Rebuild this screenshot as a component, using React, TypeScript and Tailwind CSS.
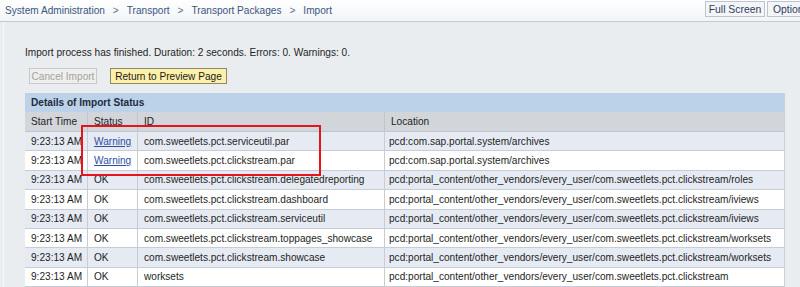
import React from 'react'

const rows = [
  { time: "9:23:13 AM", status: "Warning", id: "com.sweetlets.pct.serviceutil.par", location: "pcd:com.sap.portal.system/archives" },
  { time: "9:23:13 AM", status: "Warning", id: "com.sweetlets.pct.clickstream.par", location: "pcd:com.sap.portal.system/archives" },
  { time: "9:23:13 AM", status: "OK", id: "com.sweetlets.pct.clickstream.delegatedreporting", location: "pcd:portal_content/other_vendors/every_user/com.sweetlets.pct.clickstream/roles" },
  { time: "9:23:13 AM", status: "OK", id: "com.sweetlets.pct.clickstream.dashboard", location: "pcd:portal_content/other_vendors/every_user/com.sweetlets.pct.clickstream/iviews" },
  { time: "9:23:13 AM", status: "OK", id: "com.sweetlets.pct.clickstream.serviceutil", location: "pcd:portal_content/other_vendors/every_user/com.sweetlets.pct.clickstream/iviews" },
  { time: "9:23:13 AM", status: "OK", id: "com.sweetlets.pct.clickstream.toppages_showcase", location: "pcd:portal_content/other_vendors/every_user/com.sweetlets.pct.clickstream/worksets" },
  { time: "9:23:13 AM", status: "OK", id: "com.sweetlets.pct.clickstream.showcase", location: "pcd:portal_content/other_vendors/every_user/com.sweetlets.pct.clickstream/worksets" },
  { time: "9:23:13 AM", status: "OK", id: "worksets", location: "pcd:portal_content/other_vendors/every_user/com.sweetlets.pct.clickstream" },
];

const crumbs = ["System Administration", "Transport", "Transport Packages", "Import"];

export default function App() {
  return (
    <div className="w-[800px] h-[287px] overflow-hidden bg-[#eaedf0] font-['Liberation_Sans',Arial,sans-serif] text-[10.1px] leading-[13px] text-[#1e1e1e]">
      {/* breadcrumb bar */}
      <div className="h-[22px] flex items-center border-b border-[#c3cad4] bg-gradient-to-b from-white to-[#f2f4f7] pl-[5px] overflow-hidden">
        <div className="flex-1 flex items-center text-[#3b5580] whitespace-nowrap">
          {crumbs.map((c, i) => (
            <React.Fragment key={c}>
              {i > 0 && <span className="px-[8px] text-[#5a6f90]">&gt;</span>}
              <span>{c}</span>
            </React.Fragment>
          ))}
        </div>
        <div className="w-[95px] shrink-0 flex gap-[2px] self-start pt-[1px]">
          <button className="w-[60px] shrink-0 h-[16px] border border-[#bcc4cf] bg-[#f3f5f8] text-[#2f3e5c] text-[10.4px] leading-[13px]">Full Screen</button>
          <button className="w-[50px] shrink-0 h-[16px] border border-[#bcc4cf] bg-[#f3f5f8] text-[#2f3e5c] text-[10.4px] leading-[13px] text-left pl-[5px]">Options</button>
        </div>
      </div>

      {/* main panel */}
      <div className="ml-[3px] border-l border-[#f6f7f9] h-[265px] pl-[21px] pt-[24px] relative">
        <p className="h-[13px]">Import process has finished. Duration: 2 seconds. Errors: 0. Warnings: 0.</p>
        <div className="flex gap-[13px] mt-[9px] pl-[4px]">
          <button className="w-[68px] h-[16px] border border-[#c9c9c9] bg-[#eeeeee] text-[#a3a3a3] leading-[13px]">Cancel Import</button>
          <button className="w-[117px] h-[16px] border border-[#8c8a6e] bg-[#fdf1a9] text-[#1a1a1a] leading-[13px]">Return to Preview Page</button>
        </div>

        <div className="mt-[9px] w-[760px] border-r border-[#c9d0da]">
          <div className="h-[19px] bg-[#bcd2e8] flex items-center pl-[6px] font-bold text-[#1f2b3c]">Details of Import Status</div>
          <div className="grid grid-cols-[63px_50px_247px_1fr] h-[20px] bg-[#d2d6db] border-b border-[#c1c7d0]">
            {["Start Time", "Status", "ID", "Location"].map((h, i) => (
              <div key={h} className={`flex items-center pl-[6px] ${i < 3 ? "border-r border-[#bfc5ce]" : ""}`}>{h}</div>
            ))}
          </div>
          {rows.map((r, i) => (
            <div key={i} className={`grid grid-cols-[63px_50px_247px_1fr] h-[19.4px] border-b border-[#c7cdd7] whitespace-nowrap ${i % 2 === 0 ? "bg-[#e6ebf3]" : "bg-white"}`}>
              <div className="flex items-center pl-[6px] border-r border-[#c7cdd7]">{r.time}</div>
              <div className="flex items-center pl-[6px] border-r border-[#c7cdd7]">
                {r.status === "Warning" ? (
                  <a href="#" className="text-[#2d4fa3] underline">{r.status}</a>
                ) : (
                  r.status
                )}
              </div>
              <div className="flex items-center pl-[6px] border-r border-[#c7cdd7]">{r.id}</div>
              <div className="flex items-center pl-[4px]">{r.location}</div>
            </div>
          ))}
        </div>

        {/* red highlight */}
        <div className="absolute left-[77px] top-[103px] w-[240px] h-[51px] border-2 border-[#e3141b] pointer-events-none" />
      </div>
    </div>
  )
}
